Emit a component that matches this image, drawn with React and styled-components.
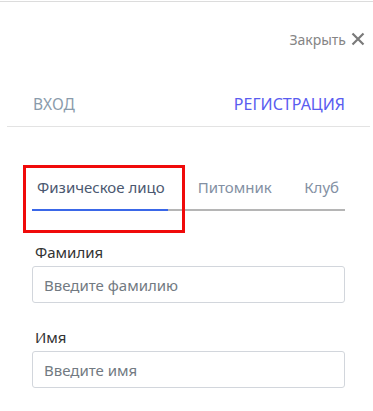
import React from "react";
import styled, { createGlobalStyle } from "styled-components";

const Global = createGlobalStyle`
  html, body { margin: 0; padding: 0; background: #fff; }
  body { font-family: "Noto Sans", "Open Sans", sans-serif; }
`;

const Page = styled.div`
  width: 373px;
  height: 411px;
  overflow: hidden;
  box-sizing: border-box;
  border-top: 1px solid #dcdcdc;
  margin-top: 1px;
`;

const CloseRow = styled.div`
  display: flex;
  justify-content: flex-end;
  padding: 26px 8px 0 0;
  height: 22px;
`;

const CloseButton = styled.button`
  display: flex;
  align-items: center;
  gap: 5px;
  border: 0;
  background: none;
  padding: 0;
  font: inherit;
  font-size: 14px;
  color: #858585;
  cursor: pointer;
`;

const AuthTabs = styled.div`
  display: flex;
  justify-content: space-between;
  margin: 43px 3px 0 7px;
  padding: 0 25px 11px 26px;
  border-bottom: 1px solid #e3e3e3;
`;

const AuthTab = styled.span`
  font-size: ${(p) => (p.$active ? 16 : 15.5)}px;
  line-height: 22px;
  color: ${(p) => (p.$active ? "#5a5cf0" : "#8a9bab")};
`;

const Form = styled.div`
  padding: 0 28px 0 32px;
`;

const SubTabs = styled.div`
  display: flex;
  margin-top: 50px;
  border-bottom: 2px solid #b5b5b5;
`;

const SubTab = styled.div`
  position: relative;
  flex-shrink: 0;
  white-space: nowrap;
  font-size: 15px;
  line-height: 20px;
  padding: 0 ${(p) => p.$pr}px 12px ${(p) => p.$pl}px;
  margin-left: ${(p) => (p.$end ? "auto" : "0")};
  color: ${(p) => (p.$active ? "#4b5870" : "#8390a3")};
  font-weight: 400;
  margin-bottom: -2px;
  border-bottom: 2px solid ${(p) => (p.$active ? "#3a67e8" : "transparent")};
`;

const Highlight = styled.div`
  position: absolute;
  left: -9px;
  top: -12px;
  width: 156px;
  height: 62px;
  border: 3px solid #f00a0a;
  pointer-events: none;
`;

const Field = styled.div`
  display: flex;
  flex-direction: column;
  margin-top: ${(p) => p.$mt}px;
`;

const Label = styled.label`
  font-size: 15px;
  line-height: 20px;
  color: #333;
  padding-left: 3px;
  margin-bottom: 4px;
`;

const Input = styled.input`
  box-sizing: border-box;
  height: 37px;
  width: 100%;
  border: 1px solid #d2d6dc;
  border-radius: 3px;
  padding: 0 11px;
  font: inherit;
  font-size: 15px;
  color: #333;
  &::placeholder { color: #727a82; }
  outline: none;
`;

const XIcon = () => (
  <svg width="14" height="14" viewBox="0 0 14 14">
    <path d="M1.5 1.5 L12.5 12.5 M12.5 1.5 L1.5 12.5" stroke="#7a7a7a" strokeWidth="2.2" strokeLinecap="butt" />
  </svg>
);

export default function App() {
  return (
    <Page>
      <Global />
      <CloseRow>
        <CloseButton>
          Закрыть <XIcon />
        </CloseButton>
      </CloseRow>
      <AuthTabs>
        <AuthTab>ВХОД</AuthTab>
        <AuthTab $active>РЕГИСТРАЦИЯ</AuthTab>
      </AuthTabs>
      <Form>
        <SubTabs>
          <SubTab $active $pl={5} $pr={3}>
            Физическое лицо
            <Highlight />
          </SubTab>
          <SubTab $pl={30} $pr={0}>Питомник</SubTab>
          <SubTab $end $pl={0} $pr={6}>Клуб</SubTab>
        </SubTabs>
        <Field $mt={31}>
          <Label>Фамилия</Label>
          <Input placeholder="Введите фамилию" />
        </Field>
        <Field $mt={24}>
          <Label>Имя</Label>
          <Input placeholder="Введите имя" />
        </Field>
      </Form>
    </Page>
  );
}
